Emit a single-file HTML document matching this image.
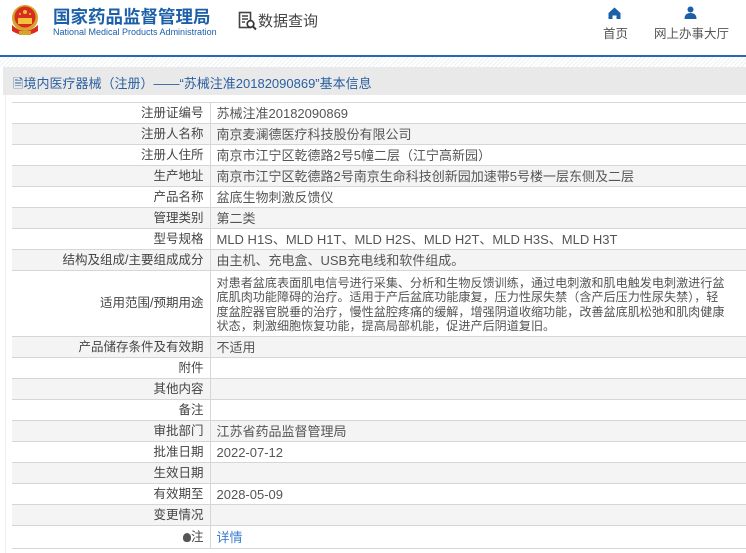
<!DOCTYPE html>
<html><head><meta charset="utf-8"><style>
*{margin:0;padding:0;box-sizing:border-box}
body{width:746px;height:553px;overflow:hidden;background:#fff;font-family:"Liberation Sans","Noto Sans CJK SC",sans-serif;color:#333;position:relative}
.abs{position:absolute}
.title{left:53px;top:6px;font-size:17.5px;line-height:22px;font-weight:bold;color:#1b5fa8;white-space:nowrap}
.sub{left:53px;top:27px;font-size:9px;line-height:11px;color:#1b5fa8;white-space:nowrap}
.dq{left:258px;top:10px;font-size:15px;color:#444;white-space:nowrap}
.nav{font-size:12.5px;color:#555;white-space:nowrap}
.line{left:0;top:55px;width:746px;height:2px;background:#2a68b0}
.stripe{left:0;top:57px;width:746px;height:10px;background:repeating-linear-gradient(135deg,#eef2f6 0 1px,#fff 1px 3px)}
.band{left:3px;top:67px;width:743px;height:28px;background:#e9e9e9}
.bc{left:13px;top:73px;font-size:13px;color:#2a5fa0;white-space:nowrap}
table{position:absolute;left:12px;top:102px;width:760px;border-collapse:collapse;font-size:12.5px}
td{border-top:1px solid #d6d6d6;border-bottom:1px solid #d6d6d6;height:21px;padding:0 6px;white-space:nowrap;line-height:19px}
td.l{width:198px;text-align:right;border-right:1px solid #d6d6d6;color:#444}
td.v{color:#555;font-size:13px}
tr:nth-child(even) td{background:#f4f4f4}
.leftbar{left:5px;top:95px;width:1px;height:458px;background:#eee}
</style></head><body>
<svg class="abs" style="left:8px;top:3px" width="34" height="34" viewBox="0 0 34 34">
<circle cx="17" cy="15" r="13" fill="#d8a32a"/>
<circle cx="17" cy="14" r="10.5" fill="#d72c1e"/>
<circle cx="17" cy="9" r="2" fill="#f3c23a"/><circle cx="12" cy="11" r="1" fill="#f3c23a"/><circle cx="22" cy="11" r="1" fill="#f3c23a"/>
<rect x="10" y="15" width="14" height="6" fill="#f3c23a"/>
<path d="M4 22 Q17 34 30 22 L30 28 Q17 36 4 28Z" fill="#d72c1e"/>
<rect x="11" y="28" width="12" height="4" fill="#d8a32a"/>
</svg>
<div class="abs title">国家药品监督管理局</div>
<div class="abs sub">National Medical Products Administration</div>
<svg class="abs" style="left:238px;top:11px" width="20" height="20" viewBox="0 0 20 20">
<rect x="1.5" y="1.5" width="11" height="15" fill="none" stroke="#444" stroke-width="1.6"/>
<path d="M4 5h6M4 8h6M4 11h3" stroke="#444" stroke-width="1.4"/>
<circle cx="12.5" cy="13" r="3.3" fill="#fff" stroke="#333" stroke-width="1.7"/>
<path d="M15 15.5l3 3" stroke="#333" stroke-width="2"/>
</svg>
<div class="abs dq">数据查询</div>
<svg class="abs" style="left:608px;top:7px" width="13" height="12" viewBox="0 0 13 12"><path d="M6.5 0.5L0.5 6V12H4.5V8.5H8.5V12H12.5V6Z" fill="#1b5fa8"/></svg>
<div class="abs nav" style="left:603px;top:23px">首页</div>
<svg class="abs" style="left:684px;top:6px" width="13" height="13" viewBox="0 0 13 13"><circle cx="6.5" cy="3.5" r="3" fill="#1b5fa8"/><path d="M0.5 13Q0.5 7 6.5 7Q12.5 7 12.5 13Z" fill="#1b5fa8"/></svg>
<div class="abs nav" style="left:654px;top:23px">网上办事大厅</div>
<div class="abs line"></div>
<div class="abs stripe"></div>
<div class="abs band"></div>
<div class="abs bc">🗎境内医疗器械（注册）——“苏械注准20182090869”基本信息</div>
<div class="abs leftbar"></div>
<table>
<tr><td class="l">注册证编号</td><td class="v">苏械注准20182090869</td></tr>
<tr><td class="l">注册人名称</td><td class="v">南京麦澜德医疗科技股份有限公司</td></tr>
<tr><td class="l">注册人住所</td><td class="v">南京市江宁区乾德路2号5幢二层（江宁高新园）</td></tr>
<tr><td class="l">生产地址</td><td class="v">南京市江宁区乾德路2号南京生命科技创新园加速带5号楼一层东侧及二层</td></tr>
<tr><td class="l">产品名称</td><td class="v">盆底生物刺激反馈仪</td></tr>
<tr><td class="l">管理类别</td><td class="v">第二类</td></tr>
<tr><td class="l">型号规格</td><td class="v">MLD H1S、MLD H1T、MLD H2S、MLD H2T、MLD H3S、MLD H3T</td></tr>
<tr><td class="l">结构及组成/主要组成成分</td><td class="v">由主机、充电盒、USB充电线和软件组成。</td></tr>
<tr><td class="l" style="height:66px">适用范围/预期用途</td><td class="v" style="line-height:14.5px;font-size:12.1px;padding-top:2px">对患者盆底表面肌电信号进行采集、分析和生物反馈训练，通过电刺激和肌电触发电刺激进行盆<br>底肌肉功能障碍的治疗。适用于产后盆底功能康复，压力性尿失禁（含产后压力性尿失禁），轻<br>度盆腔器官脱垂的治疗，慢性盆腔疼痛的缓解，增强阴道收缩功能，改善盆底肌松弛和肌肉健康<br>状态，刺激细胞恢复功能，提高局部机能，促进产后阴道复旧。</td></tr>
<tr><td class="l">产品储存条件及有效期</td><td class="v">不适用</td></tr>
<tr><td class="l">附件</td><td class="v"></td></tr>
<tr><td class="l">其他内容</td><td class="v"></td></tr>
<tr><td class="l">备注</td><td class="v"></td></tr>
<tr><td class="l">审批部门</td><td class="v">江苏省药品监督管理局</td></tr>
<tr><td class="l">批准日期</td><td class="v">2022-07-12</td></tr>
<tr><td class="l">生效日期</td><td class="v"></td></tr>
<tr><td class="l">有效期至</td><td class="v">2028-05-09</td></tr>
<tr><td class="l">变更情况</td><td class="v"></td></tr>
<tr><td class="l" style="height:23px"><span style="display:inline-block;width:8px;height:9px;border-radius:50% 50% 40% 40%;background:#555;vertical-align:-1px"></span>注</td><td class="v" style="color:#3b7cd0">详情</td></tr>
</table>
</body></html>
